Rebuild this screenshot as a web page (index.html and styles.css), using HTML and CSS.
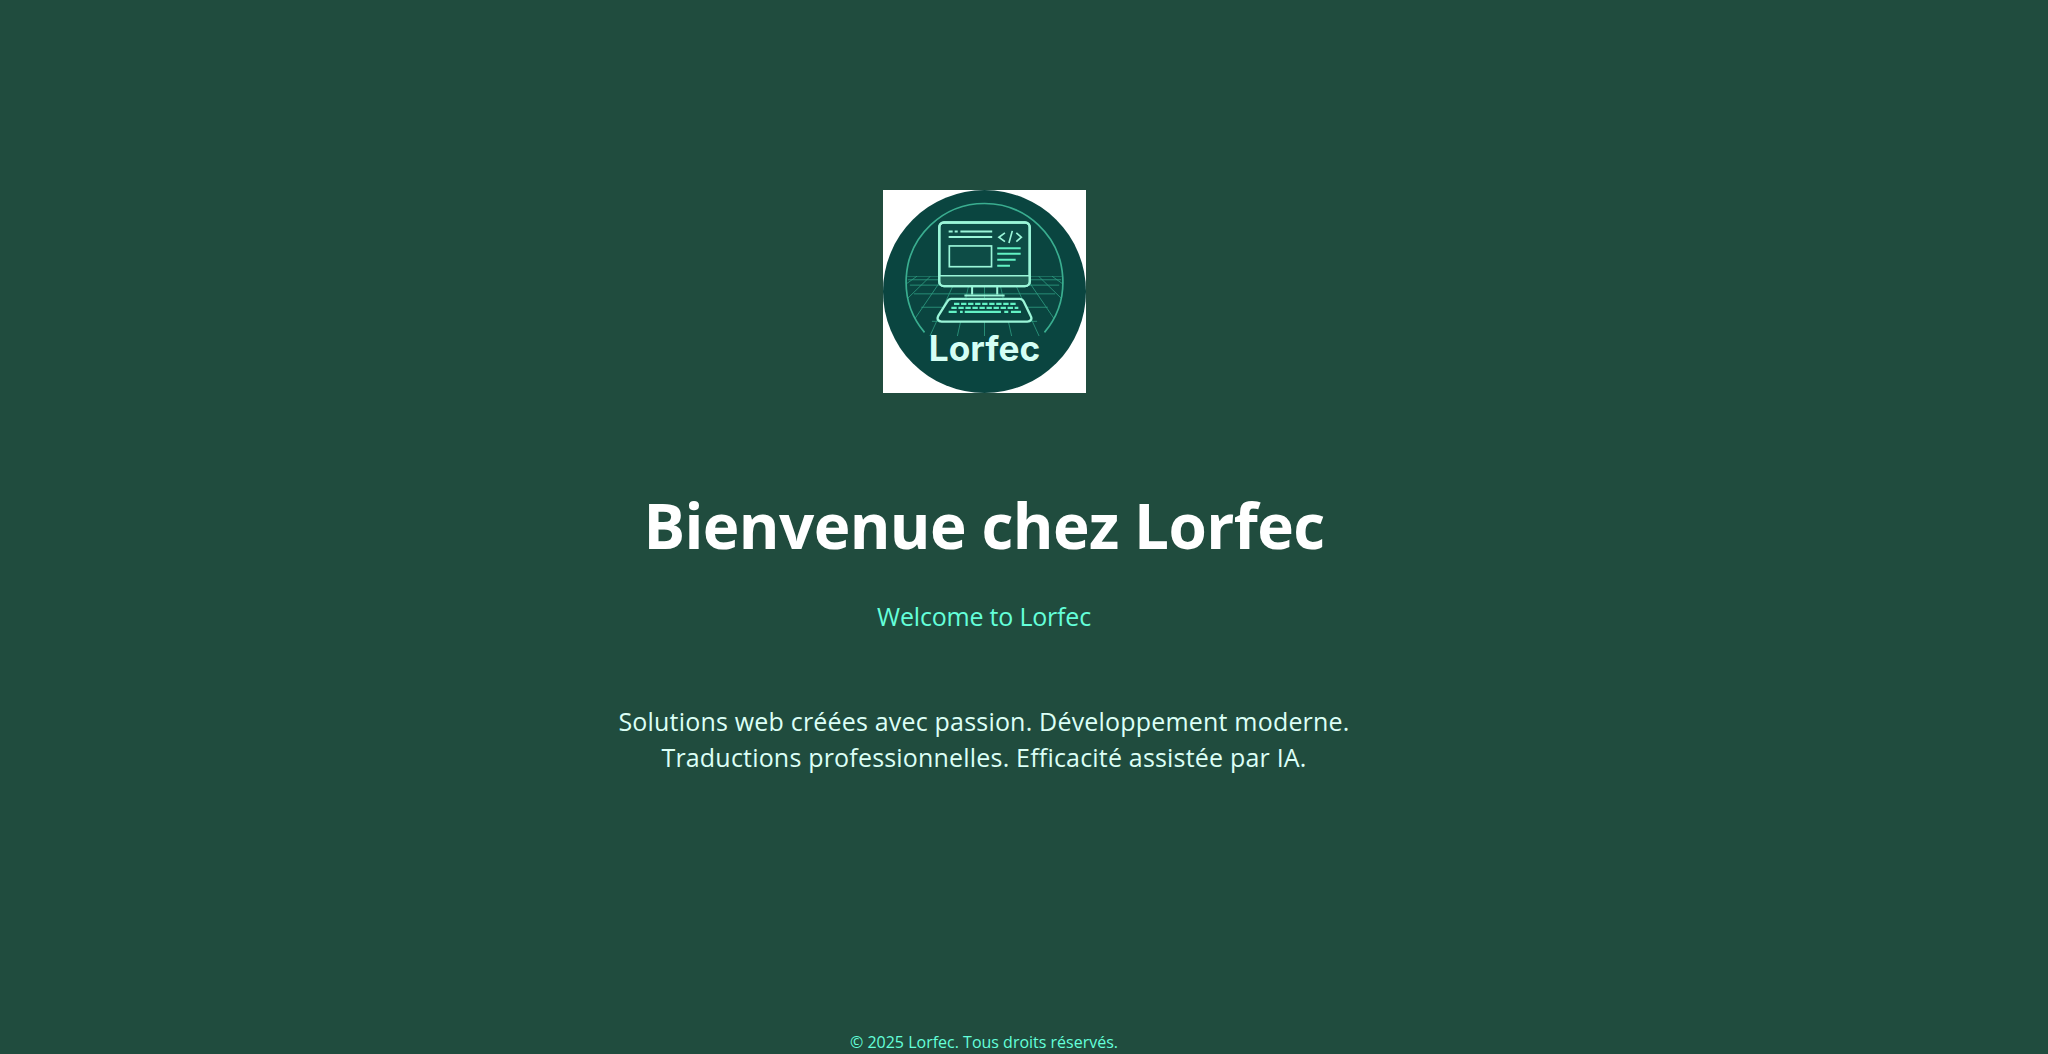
FILE: index.html
```html
<!DOCTYPE html>
<html lang="fr">
<head>
<meta charset="utf-8">
<title>Lorfec</title>
<link rel="stylesheet" href="styles.css">
</head>
<body>
<main class="hero">
  <svg class="logo" viewBox="0 0 606 606" role="img" aria-label="Lorfec">
    <defs>
      <clipPath id="ring"><path d="M69 257H537A234 234 0 0 1 482 425L470 436H136L124 425A234 234 0 0 1 69 257Z"/></clipPath>
    </defs>
    <rect width="606" height="606" fill="#fff"/>
    <circle cx="303" cy="303" r="303" fill="#0a4540"/>
    <g clip-path="url(#ring)">
      <g fill="none" stroke="#2e9a80" stroke-width="2.5">
        <path d="M72 257H534M74 268H532M80 284H526M92 310H514M114 350H492M146 392H460"/>
        <path d="M303 257V436M262 257L222 436M222 257L140 436M182 257L60 436M142 257L0 395M102 257L0 330M344 257L384 436M384 257L466 436M424 257L546 436M464 257L606 395M504 257L606 330"/>
      </g>
    </g>
    <path d="M124 425A234 234 0 1 1 482 425" fill="none" stroke="#3aae90" stroke-width="5"/>
    <g fill="none" stroke="#9af5d8" stroke-width="7">
      <rect x="168" y="97" width="270" height="190" rx="14" fill="#0d4c46"/>
      <path d="M171 257H435V273a11 11 0 0 1 -11 11H182a11 11 0 0 1 -11 -11Z" fill="#1f6155" stroke="none"/>
      <rect x="168" y="97" width="270" height="190" rx="14"/>
      <path d="M170 256H436" stroke-width="4"/>
      <rect x="198" y="167" width="126" height="62" stroke-width="5"/>
      <path d="M266 287V312M341 287V312" stroke-width="6"/>
      <path d="M243 315H363" stroke-width="6"/>
      <path d="M204 325H408a14 14 0 0 1 12 8L441 376c5 9 0 17 -10 17H175c-10 0 -15 -8 -10 -17L192 333a14 14 0 0 1 12 -8Z" fill="#0a4540"/>
      <path d="M196 124H208M214 124H223M231 124H326M196 140H326" stroke-width="6"/>
      <path d="M364 128L346 141L364 154M376 158L386 122M398 128L413 141L398 154" stroke-width="5"/>
      <path d="M341 174H411M341 190H411M341 208H396M341 226H379" stroke="#62f2c4" stroke-width="6"/>
    </g>
    <g fill="none" stroke="#62f2c4" stroke-width="7" stroke-dasharray="16 5">
      <path d="M212 340H396"/>
      <path d="M204 352H404"/>
    </g>
    <path d="M196 364H220M230 364H238M244 364H352M362 364H374M382 364H412" fill="none" stroke="#62f2c4" stroke-width="7"/>
    <text class="logo-word" x="303" y="510" text-anchor="middle" textLength="333" lengthAdjust="spacingAndGlyphs">Lorfec</text>
  </svg>
  <h1 class="title">Bienvenue chez Lorfec</h1>
  <p class="subtitle">Welcome to Lorfec</p>
  <p class="lead">Solutions web créées avec passion. Développement moderne.<br>Traductions professionnelles. Efficacité assistée par IA.</p>
</main>
<footer class="foot">© 2025 Lorfec. Tous droits réservés.</footer>
</body>
</html>
```
FILE: styles.css
```css
* { box-sizing: border-box; }
html, body { height: 100%; margin: 0; }
body {
  display: flex;
  flex-direction: column;
  align-items: center;
  height: 1054px;
  padding-right: 80px;
  overflow: hidden;
  background: #204c3e;
  font-family: "Open Sans", "Noto Sans", sans-serif;
  text-align: center;
}
.hero {
  flex: 1;
  display: flex;
  flex-direction: column;
  align-items: center;
  padding-top: 190px;
}
.logo { width: 203px; height: 203px; display: block; }
.logo-word { font-family: Inter, sans-serif; font-weight: 700; font-size: 104px; fill: #d5fff5; }
.title {
  margin: 92px 0 0;
  font-size: 62px;
  line-height: 80px;
  font-weight: 700;
  color: #fff;
  letter-spacing: -0.6px;
}
.subtitle {
  margin: 35px 0 0;
  font-size: 25px;
  line-height: 32px;
  color: #64ffda;
  letter-spacing: -0.2px;
}
.lead {
  margin: 71px 0 0;
  font-size: 25px;
  line-height: 36px;
  color: #dcfff6;
  letter-spacing: 0.19px;
}
.foot {
  padding-bottom: 1px;
  font-size: 16px;
  line-height: 22px;
  color: #64ffda;
}
```
